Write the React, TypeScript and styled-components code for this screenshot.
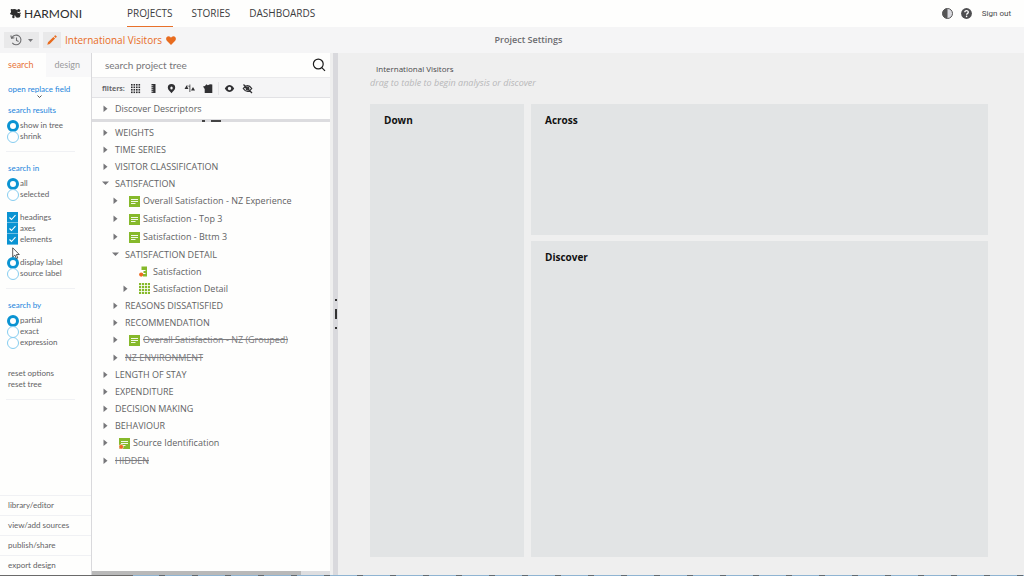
import React from "react";
import styled, { createGlobalStyle, css } from "styled-components";

const Global = createGlobalStyle`
  * { box-sizing: border-box; }
  body { margin: 0; background: #fefefd; color: #626264; font: 9px/12px "Open Sans", "Noto Sans", sans-serif; }
  button, input { font: inherit; color: inherit; }
  button { border: 0; padding: 0; background: none; cursor: pointer; }
  a { color: inherit; text-decoration: none; }
  ul { list-style: none; margin: 0; padding: 0; }
  svg { display: block; flex: none; }
`;

const Page = styled.div`
  min-height: 100vh;
  display: flex;
  flex-direction: column;
`;

/* ---------- header ---------- */
const Header = styled.header`
  display: flex;
  align-items: stretch;
  height: 27px;
  padding: 0 13px 0 10px;
`;
const Brand = styled.a`
  display: flex;
  align-items: center;
  gap: 3px;
  width: 117px;
  color: #2c2c2c;
  font: 12px/16px Lato, sans-serif;
`;
const Nav = styled.nav`
  display: flex;
  gap: 19px;
  flex: 1;
`;
const NavLink = styled.a<{ $active?: boolean }>`
  font-size: 10px;
  line-height: 27px;
  height: 27px;
  color: #3c3c3e;
  border-bottom: 1px solid ${(p) => (p.$active ? "#e8712a" : "transparent")};
`;
const Account = styled.div`
  display: flex;
  align-items: center;
  gap: 8px;
  font-size: 8px;
`;
const SignOut = styled.button`
  margin-left: 2px;
  font: 8px/12px Roboto, sans-serif;
  color: #4a4a4c;
`;

/* ---------- project bar ---------- */
const ProjectBar = styled.div`
  display: grid;
  grid-template-columns: 1fr auto 1fr;
  align-items: center;
  height: 26px;
  padding: 0 4px;
  background: #f5f5f6;
`;
const ProjectName = styled.div`
  display: flex;
  align-items: center;
  gap: 4px;
  color: #e86c1f;
  font-size: 10px;
  font-weight: 500;
`;
const BarButton = styled.button<{ $wide?: boolean }>`
  display: flex;
  align-items: center;
  justify-content: center;
  gap: 6px;
  width: ${(p) => (p.$wide ? 35 : 18)}px;
  height: 16px;
  background: #e9e9ea;
`;
const BarTitle = styled.h1`
  margin: 0 0 0 33px;
  font: 600 9px/12px "Open Sans", sans-serif;
  color: #6c6c70;
`;

/* ---------- body ---------- */
const Body = styled.div`
  flex: 1;
  display: grid;
  grid-template-columns: 91px 239px 3px 5px 1fr;
`;

const Sidebar = styled.aside`
  display: flex;
  flex-direction: column;
  font: 8px/12px Lato, sans-serif;
`;
const Tabs = styled.div`
  display: grid;
  grid-template-columns: 1fr 1fr;
  height: 24px;
`;
const Tab = styled.button<{ $active?: boolean }>`
  font: 9px/12px Lato, sans-serif;
  color: ${(p) => (p.$active ? "#e8743a" : "#9a9a9c")};
  background: ${(p) => (p.$active ? "transparent" : "#f8f8f9")};
  text-align: left;
  padding-left: ${(p) => (p.$active ? 8 : 9)}px;
`;
const ReplaceField = styled.button`
  display: flex;
  flex-direction: column;
  align-items: center;
  align-self: flex-start;
  margin: 6px 0 4px 8px;
  height: 17px;
  color: #1b84dc;
`;
const Section = styled.section`
  margin: 0 16px 0 6px;
  padding: 0 0 9px 1px;
  border-bottom: 1px solid #f0f1f4;
  & + & { padding-top: 10px; }
`;
const Group = styled.fieldset<{ $gap?: number }>`
  border: 0;
  min-width: 0;
  margin: ${(p) => p.$gap ?? 0}px 0 0;
  padding: 0;
`;
const Legend = styled.legend`
  padding: 0 0 4px 1px;
  color: #1b84dc;
`;
const Option = styled.label`
  display: flex;
  align-items: center;
  gap: 1px;
  line-height: 11px;
  height: 11px;
`;
const Radio = styled.input`
  appearance: none;
  margin: 0;
  width: 12px;
  height: 12px;
  border: 1px solid #86cdf0;
  border-radius: 50%;
  background: #fff;
  &:checked { border: 3px solid #0a93d2; }
`;
const Check = styled.input`
  appearance: none;
  margin: 0;
  width: 11px;
  height: 11px;
  background: #0a93d2;
  border-bottom: 1px solid #6cbfe4;
`;
const CheckBox = styled.span`
  display: grid;
  width: 12px;
  & > * { grid-area: 1 / 1; }
  svg { pointer-events: none; }
`;
const ResetButton = styled.button`
  display: block;
  line-height: 11px;
  padding-left: 1px;
`;
const SideLinks = styled.nav`
  margin-top: auto;
`;
const SideLink = styled.a`
  display: block;
  line-height: 19px;
  padding-left: 8px;
  border-top: 1px solid #f0f1f4;
`;
const PointerLayer = styled.div`
  position: absolute;
  left: 12px;
  top: 247px;
`;

/* ---------- tree ---------- */
const TreePane = styled.section`
  display: flex;
  flex-direction: column;
  border-left: 1px solid #d9d9dc;
`;
const SearchBar = styled.div`
  display: flex;
  align-items: center;
  height: 24px;
  padding: 0 4px 0 13px;
`;
const SearchInput = styled.input`
  flex: 1;
  min-width: 0;
  border: 0;
  padding: 0;
  outline: 0;
  background: none;
  font: 10px/14px Lato, sans-serif;
  &::placeholder { color: #77777a; opacity: 1; }
`;
const Filters = styled.div`
  display: flex;
  align-items: center;
  gap: 7px;
  height: 21px;
  padding: 2px 0 0 10px;
  background: #f5f5f6;
  border-top: 1px solid #eaeaec;
  border-bottom: 1px solid #e2e2e5;
  color: #303033;
`;
const FiltersLabel = styled.span`
  font: 700 7px/10px "Open Sans", sans-serif;
  width: 21px;
  color: #68686b;
`;
const FilterButton = styled.button`
  width: 11px;
  height: 11px;
`;
const FilterSeparator = styled.i`
  width: 1px;
  height: 13px;
  margin: 0 -2px;
  background: #e4e4e6;
`;
const Splitter = styled.div`
  display: flex;
  align-items: center;
  justify-content: center;
  gap: 6px;
  height: 3px;
  margin-bottom: 2px;
  background: #dcdcdf;
`;
const SplitMark = styled.i<{ $w: number }>`
  width: ${(p) => p.$w}px;
  height: 2px;
  background: #444;
`;
const List = styled.ul`
  flex: 1;
`;
const Row = styled.div<{ $level: number; $tall?: boolean; $struck?: boolean }>`
  display: flex;
  align-items: center;
  height: ${(p) => (p.$tall ? 18 : 17)}px;
  padding-left: ${(p) => 9 + p.$level * 10}px;
  white-space: nowrap;
  ${(p) =>
    p.$struck &&
    css`
      color: #7c7c7f;
      text-decoration: line-through;
    `}
`;
const Pinned = styled.div`
  display: flex;
  align-items: center;
  height: 21px;
`;
const Toggle = styled.button`
  width: 8px;
  height: 10px;
  margin-right: 6px;
`;
const ToggleSpace = styled.span`
  width: 14px;
`;
const IconSlot = styled.span`
  margin: 0 3px 0 4px;
`;
const ScrollTrack = styled.div`
  height: 4px;
  background: #dedee0;
`;
const ScrollThumb = styled.div`
  width: 88%;
  height: 4px;
  background: #b9b9b9;
`;
const Gutter = styled.div`
  background: #efefef;
`;
const Divider = styled.div`
  display: flex;
  flex-direction: column;
  align-items: center;
  justify-content: center;
  gap: 8px;
  background: #d9d9dd;
`;
const Dot = styled.i<{ $h: number }>`
  width: 2px;
  height: ${(p) => p.$h}px;
  background: #333;
`;

/* ---------- workspace ---------- */
const Workspace = styled.main`
  display: flex;
  flex-direction: column;
  padding: 10px 36px 18px 32px;
  background: #efefef;
`;
const Crumb = styled.div`
  padding-left: 6px;
  font: 8px/12px "Open Sans", sans-serif;
  color: #4a4a4c;
`;
const Hint = styled.p`
  margin: 2px 0 15px;
  font: italic 9px/12px "Open Sans", sans-serif;
  color: #b7b7b9;
`;
const DropGrid = styled.div`
  flex: 1;
  display: grid;
  grid-template-columns: 154px 1fr;
  grid-template-rows: 131px 1fr;
  gap: 6px 7px;
`;
const DropZone = styled.section<{ $tall?: boolean }>`
  grid-row: ${(p) => (p.$tall ? "1 / 3" : "auto")};
  padding: 9px 14px;
  background: #e2e4e5;
`;
const ZoneTitle = styled.h2`
  margin: 0;
  font: 700 10px/15px "Open Sans", sans-serif;
  color: #111;
`;
const BottomEdge = styled.footer`
  height: 1px;
  background: linear-gradient(90deg, #6a6a6a 133px, transparent 133px),
    repeating-linear-gradient(90deg, #8fb4d2 0 27px, #5f6a72 27px 33px);
`;

/* ---------- icons ---------- */
const Logo = () => (
  <svg width="11" height="11" viewBox="0 0 11 11" fill="#2c2c2c">
    <circle cx="4.2" cy="4.4" r="3.3" />
    <circle cx="8.7" cy="2.5" r="1.6" />
    <circle cx="7.8" cy="7.3" r="2.5" />
    <circle cx="1.6" cy="2" r="1" />
    <circle cx="1" cy="5.6" r="0.9" />
    <circle cx="3.4" cy="9" r="1.2" />
    <circle cx="10" cy="5.2" r="0.8" />
    <path d="M4 4l4 4M4.5 4.5l4-2M4 4L3.3 9" stroke="#2c2c2c" />
  </svg>
);
const Contrast = () => (
  <svg width="11" height="11" viewBox="0 0 11 11">
    <circle cx="5.5" cy="5.5" r="5" fill="#d9d9de" stroke="#555" />
    <path d="M5.5 .5a5 5 0 0 0 0 10z" fill="#555" />
  </svg>
);
const Help = () => (
  <svg width="11" height="11" viewBox="0 0 11 11">
    <circle cx="5.5" cy="5.5" r="5.4" fill="#4e4e50" />
    <path d="M3.8 4.3c0-2.3 3.5-2.2 3.5-.1 0 1.2-1.7 1.2-1.7 2.5" fill="none" stroke="#fff" strokeWidth="1.3" />
    <circle cx="5.6" cy="8.4" r=".8" fill="#fff" />
  </svg>
);
const History = () => (
  <svg width="12" height="12" viewBox="0 0 12 12" fill="none" stroke="#6e6e70" strokeWidth="1.1">
    <path d="M2 3.5A4.8 4.8 0 1 1 2.3 8.8M.8 1.5L1.6 4.3 4.4 3.8M6.5 3.5V6.5L8.6 7.6" />
  </svg>
);
const Caret = () => (
  <svg width="5" height="3" viewBox="0 0 5 3"><path d="M0 0h5L2.5 3z" fill="#77777a" /></svg>
);
const Pencil = () => (
  <svg width="10" height="10" viewBox="0 0 10 10" fill="#e86c1f">
    <path d="M.3 9.7L1 7.3 6.4 1.9 8.1 3.6 2.7 9zM7 1.3L7.9.4q.4-.3.8 0l.9.9q.3.4 0 .8L8.7 3z" />
  </svg>
);
const Heart = () => (
  <svg width="10" height="9" viewBox="0 0 10 9" fill="#e86c1f">
    <path d="M5 9L.8 4.7C-.8 2.6.6.2 2.5.2 3.8.2 4.6 1 5 1.8 5.4 1 6.2.2 7.5.2 9.4.2 10.8 2.6 9.2 4.7z" />
  </svg>
);
const Magnifier = () => (
  <svg width="14" height="14" viewBox="0 0 14 14" fill="none" stroke="#1d1d1d" strokeWidth="1.2">
    <circle cx="6.3" cy="6" r="4.9" /><path d="M9.8 9.6L13 12.8" />
  </svg>
);
const Chevron = () => (
  <svg width="5" height="3" viewBox="0 0 5 3" fill="none" stroke="#555"><path d="M.5 .5l2 2 2-2" /></svg>
);
const Tick = () => (
  <svg width="11" height="11" viewBox="0 0 11 11" fill="none" stroke="#fff" strokeWidth="1.1">
    <path d="M2.5 5.5l2 2 4-4.3" />
  </svg>
);
const Triangle = ({ open }: { open?: boolean }) => (
  <svg width="8" height="8" viewBox="0 0 8 8" fill="#77777a">
    <path d={open ? "M1 1.5h7L4.5 5z" : "M2.5 .5L6.5 3.8 2.5 7z"} />
  </svg>
);
const filterShapes: Record<string, React.ReactNode> = {
  "Grid fields": [0, 1, 2, 3].map((r) =>
    [0, 1, 2, 3].map((c) => <rect key={`${r}${c}`} x={1 + c * 2.5} y={1 + r * 2.5} width="1.6" height="1.6" />)
  ),
  "Ruler fields": (
    <>
      <path d="M3.5 1h4v9h-4z" />
      <path d="M3 2.7h2.3M3 4.7h2.3M3 6.7h2.3M3 8.7h2.3" stroke="#f5f5f6" strokeWidth=".7" />
    </>
  ),
  "Located fields": (
    <path fillRule="evenodd" d="M5.5 1a3.7 3.7 0 0 1 3.7 3.7C9.2 7 7 7.8 5.5 10.3 4 7.8 1.8 7 1.8 4.7A3.7 3.7 0 0 1 5.5 1zm0 2.4a1.2 1.6 0 1 0 0 3.2 1.2 1.6 0 0 0 0-3.2z" />
  ),
  "Weighted fields": (
    <path d="M.5 6L2.5 2.5 4.5 6zM7 7.5L9 4 11 7.5zM5.5 1.5h.8v7.5h-.8zM2.5 2.5l3 .5v.6l-3-.5z" />
  ),
  "Tagged fields": <path d="M1 3.5l2-.5L4.3 1.3l1.5.9L8 1.3l2.3.2V10H2.7V6z" />,
  "Visible fields": (
    <path fillRule="evenodd" d="M.8 5.5C2.5 2.8 4 2 5.5 2s3 .8 4.7 3.5C8.5 8.2 7 9 5.5 9S2.5 8.2.8 5.5zM5.5 3.8a1.7 1.7 0 1 0 0 3.4 1.7 1.7 0 0 0 0-3.4z" />
  ),
  "Concealed fields": (
    <g fill="none" stroke="#303033" strokeWidth="1.3">
      <path d="M1.3 5.5C3.8 1.6 7.2 1.6 9.7 5.5 7.2 9.4 3.8 9.4 1.3 5.5zM1.5 1.5l8.5 8.5" />
      <circle cx="5.5" cy="5.5" r="1.3" />
    </g>
  ),
};

type IconKind = "card" | "flagged" | "grid" | "ruler";
const NodeIcon = ({ kind }: { kind: IconKind }) => (
  <svg width="11" height="11" viewBox="0 0 11 11">
    {(kind === "card" || kind === "flagged") && (
      <>
        <rect width="11" height="11" fill="#86b92b" />
        <path d="M2 3.5h7M2 5.5h7M2 7.5h4.5" stroke="#fff" strokeWidth=".9" />
      </>
    )}
    {kind === "grid" && (
      <>
        <rect width="11" height="11" fill="#86b92b" />
        <path d="M2.5 0v11M5.5 0v11M8.5 0v11M0 2.5h11M0 5.5h11M0 8.5h11" stroke="#fff" strokeWidth=".8" />
      </>
    )}
    {kind === "ruler" && (
      <>
        <path d="M2.5 .5H8V10.5H4V8H6.5V7H4.5V5H6.5V4H2.5z" fill="#86b92b" />
        <circle cx="2.2" cy="8.6" r="2.1" fill="#ee6a22" />
      </>
    )}
    {kind === "flagged" && <circle cx="2.2" cy="8.8" r="2.3" fill="#ee6a22" stroke="#fff" strokeWidth=".5" />}
  </svg>
);

interface Node {
  label: string;
  icon?: IconKind;
  leaf?: boolean;
  struck?: boolean;
  children?: Node[];
}
const tree: Node[] = [
  { label: "WEIGHTS" },
  { label: "TIME SERIES" },
  { label: "VISITOR CLASSIFICATION" },
  {
    label: "SATISFACTION",
    children: [
      { label: "Overall Satisfaction - NZ Experience", icon: "card" },
      { label: "Satisfaction - Top 3", icon: "card" },
      { label: "Satisfaction - Bttm 3", icon: "card" },
      {
        label: "SATISFACTION DETAIL",
        children: [
          { label: "Satisfaction", icon: "ruler", leaf: true },
          { label: "Satisfaction Detail", icon: "grid" },
        ],
      },
      { label: "REASONS DISSATISFIED" },
      { label: "RECOMMENDATION" },
      { label: "Overall Satisfaction - NZ (Grouped)", icon: "card", struck: true },
      { label: "NZ ENVIRONMENT", struck: true },
    ],
  },
  { label: "LENGTH OF STAY" },
  { label: "EXPENDITURE" },
  { label: "DECISION MAKING" },
  { label: "BEHAVIOUR" },
  { label: "Source Identification", icon: "flagged" },
  { label: "HIDDEN", struck: true },
];

const Branch = ({ node, level }: { node: Node; level: number }) => (
  <li>
    <Row $level={level} $tall={!!node.icon && level < 2} $struck={node.struck}>
      {node.leaf ? (
        <ToggleSpace />
      ) : (
        <Toggle aria-label={`Toggle ${node.label}`}><Triangle open={!!node.children} /></Toggle>
      )}
      {node.icon && <IconSlot><NodeIcon kind={node.icon} /></IconSlot>}
      <span>{node.label}</span>
    </Row>
    {node.children && (
      <ul>{node.children.map((c) => <Branch key={c.label} node={c} level={level + 1} />)}</ul>
    )}
  </li>
);

const RadioRow = ({ name, label, on }: { name: string; label: string; on?: boolean }) => (
  <Option><Radio type="radio" name={name} defaultChecked={on} />{label}</Option>
);
const CheckRow = ({ label }: { label: string }) => (
  <Option><CheckBox><Check type="checkbox" defaultChecked /><Tick /></CheckBox>{label}</Option>
);

export default function App() {
  return (
    <Page>
      <Global />
      <Header>
        <Brand href="#"><Logo />HARMONI</Brand>
        <Nav>
          <NavLink href="#" $active>PROJECTS</NavLink>
          <NavLink href="#">STORIES</NavLink>
          <NavLink href="#">DASHBOARDS</NavLink>
        </Nav>
        <Account>
          <button aria-label="Contrast"><Contrast /></button>
          <button aria-label="Help"><Help /></button>
          <SignOut>Sign out</SignOut>
        </Account>
      </Header>
      <ProjectBar>
        <ProjectName>
          <BarButton $wide aria-label="History"><History /><Caret /></BarButton>
          <BarButton aria-label="Edit"><Pencil /></BarButton>
          International Visitors
          <Heart />
        </ProjectName>
        <BarTitle>Project Settings</BarTitle>
      </ProjectBar>
      <Body>
        <Sidebar>
          <Tabs>
            <Tab $active>search</Tab>
            <Tab>design</Tab>
          </Tabs>
          <ReplaceField>open replace field<Chevron /></ReplaceField>
          <Section>
            <Group>
              <Legend>search results</Legend>
              <RadioRow name="results" label="show in tree" on />
              <RadioRow name="results" label="shrink" />
            </Group>
          </Section>
          <Section>
            <Group>
              <Legend>search in</Legend>
              <RadioRow name="scope" label="all" on />
              <RadioRow name="scope" label="selected" />
            </Group>
            <Group $gap={12}>
              <CheckRow label="headings" />
              <CheckRow label="axes" />
              <CheckRow label="elements" />
            </Group>
            <Group $gap={12}>
              <RadioRow name="label" label="display label" on />
              <RadioRow name="label" label="source label" />
            </Group>
          </Section>
          <Section>
            <Group>
              <Legend>search by</Legend>
              <RadioRow name="match" label="partial" on />
              <RadioRow name="match" label="exact" />
              <RadioRow name="match" label="expression" />
            </Group>
            <Group $gap={20}>
              <ResetButton>reset options</ResetButton>
              <ResetButton>reset tree</ResetButton>
            </Group>
          </Section>
          <SideLinks>
            {["library/editor", "view/add sources", "publish/share", "export design"].map((l) => (
              <SideLink key={l} href="#">{l}</SideLink>
            ))}
          </SideLinks>
        </Sidebar>
        <TreePane>
          <SearchBar>
            <SearchInput aria-label="Search project tree" placeholder="search project tree" />
            <button aria-label="Search"><Magnifier /></button>
          </SearchBar>
          <Filters>
            <FiltersLabel>filters:</FiltersLabel>
            {Object.entries(filterShapes).map(([name, shape]) => (
              <React.Fragment key={name}>
                {name === "Visible fields" && <FilterSeparator />}
                <FilterButton aria-label={name}>
                  <svg width="11" height="11" viewBox="0 0 11 11" fill="#303033">{shape}</svg>
                </FilterButton>
              </React.Fragment>
            ))}
          </Filters>
          <Pinned>
            <Row $level={0}>
              <Toggle aria-label="Toggle Discover Descriptors"><Triangle /></Toggle>
              <span>Discover Descriptors</span>
            </Row>
          </Pinned>
          <Splitter><SplitMark $w={3} /><SplitMark $w={10} /></Splitter>
          <List>{tree.map((n) => <Branch key={n.label} node={n} level={0} />)}</List>
          <ScrollTrack><ScrollThumb /></ScrollTrack>
        </TreePane>
        <Gutter />
        <Divider><Dot $h={2} /><Dot $h={10} /><Dot $h={2} /></Divider>
        <Workspace>
          <Crumb>International Visitors</Crumb>
          <Hint>drag to table to begin analysis or discover</Hint>
          <DropGrid>
            <DropZone $tall><ZoneTitle>Down</ZoneTitle></DropZone>
            <DropZone><ZoneTitle>Across</ZoneTitle></DropZone>
            <DropZone><ZoneTitle>Discover</ZoneTitle></DropZone>
          </DropGrid>
        </Workspace>
      </Body>
      <BottomEdge />
      <PointerLayer>
        <svg width="9" height="13" viewBox="0 0 9 13">
          <path d="M.7 .8V10L2.9 8 4.4 11.6 5.8 11 4.4 7.5H7.3z" fill="#fff" stroke="#333" strokeWidth=".8" />
        </svg>
      </PointerLayer>
    </Page>
  );
}
